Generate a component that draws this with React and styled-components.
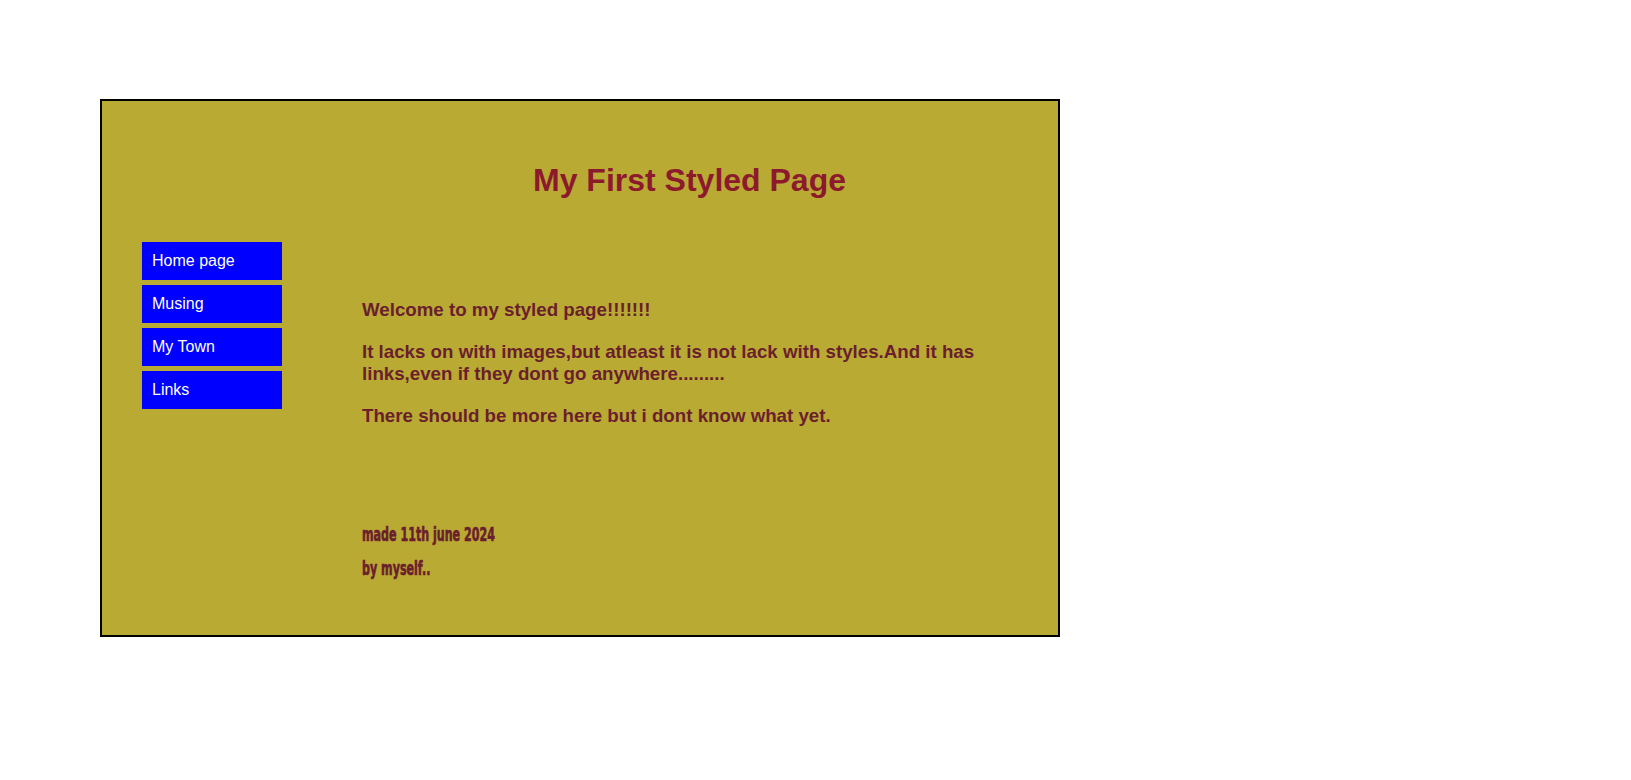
import React from "react";
import styled, { createGlobalStyle } from "styled-components";

const Global = createGlobalStyle`
  html, body { margin: 0; padding: 0; background: #ffffff; }
  body { font-family: "Liberation Sans", Arial, sans-serif; }
`;

const Page = styled.div`
  padding: 99px 0 0 100px;
`;

const Frame = styled.div`
  width: 956px;
  border: 2px solid #000000;
  background: #b9aa34;
  padding: 0 0 58px 0;
`;

const Header = styled.header`
  margin-left: 260px;
  width: 655px;
  padding-top: 61px;
`;

const Title = styled.h1`
  margin: 0;
  font-family: "Liberation Sans", Arial, sans-serif;
  font-size: 32px;
  font-weight: bold;
  line-height: 37px;
  color: #8c1a2c;
  text-align: center;
`;

const Body = styled.div`
  display: flex;
  align-items: flex-start;
  margin-top: 43px;
`;

const Nav = styled.nav`
  display: flex;
  flex-direction: column;
  gap: 5px;
  margin-left: 40px;
  width: 140px;
`;

const NavLink = styled.a`
  display: block;
  box-sizing: border-box;
  height: 38px;
  padding: 10px 10px;
  background: #0000ff;
  color: #ffffff;
  font-family: "Liberation Sans", Arial, sans-serif;
  font-size: 16px;
  line-height: 18px;
  text-decoration: none;
  outline: none;
`;

const Main = styled.main`
  margin-left: 80px;
  width: 655px;
  padding-top: 57px;
`;

const Para = styled.h3`
  margin: 0 0 19px 0;
  font-family: "Liberation Sans", Arial, sans-serif;
  font-size: 18.72px;
  font-weight: bold;
  line-height: 22.5px;
  color: #6b1e2c;
`;

const Footer = styled.footer`
  margin-top: 98px;
`;

const Note = styled.p`
  margin: 0 0 16px 0;
  font-family: Impact, "DejaVu Sans Condensed", sans-serif;
  font-weight: bold;
  font-size: 19px;
  line-height: 18px;
  color: #6b1e2c;
  -webkit-text-stroke: 0.6px #6b1e2c;
  white-space: nowrap;
  transform: scaleX(0.65);
  transform-origin: left center;
  &:last-child { margin-bottom: 0; }
`;

export default function App() {
  const links = ["Home page", "Musing", "My Town", "Links"];
  return (
    <>
      <Global />
      <Page>
        <Frame>
          <Header>
            <Title>My First Styled Page</Title>
          </Header>
          <Body>
            <Nav>
              {links.map((l) => (
                <NavLink key={l} href="#">{l}</NavLink>
              ))}
            </Nav>
            <Main>
              <Para>Welcome to my styled page!!!!!!!</Para>
              <Para>
                It lacks on with images,but atleast it is not lack with styles.And it has links,even if they dont go anywhere.........
              </Para>
              <Para>There should be more here but i dont know what yet.</Para>
              <Footer>
                <Note>made 11th june 2024</Note>
                <Note>by myself..</Note>
              </Footer>
            </Main>
          </Body>
        </Frame>
      </Page>
    </>
  );
}
